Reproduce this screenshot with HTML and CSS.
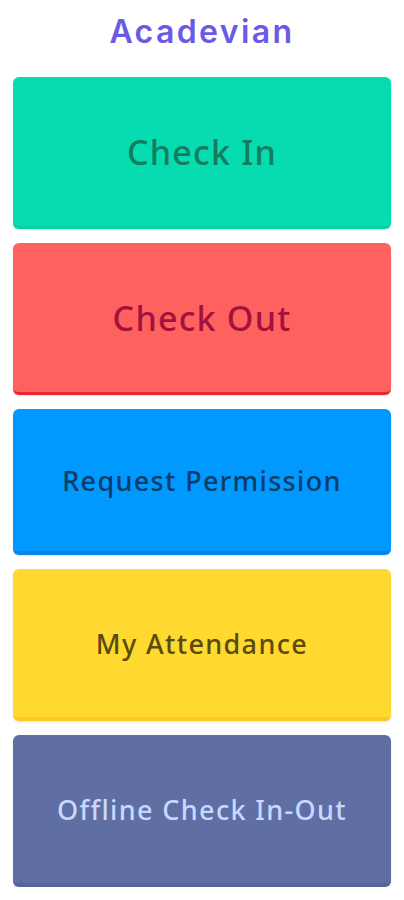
FILE: index.html
```html
<!DOCTYPE html>
<html lang="en">
<head>
  <meta charset="UTF-8" />
  <meta name="viewport" content="width=device-width, initial-scale=1.0"/>
  <title>Acadevian</title>
  <link rel="stylesheet" href="styles.css">
</head>
<body>
  <h1 class="brand">Acadevian</h1>

  <div class="menu">
    <button class="tile tile-in">Check In</button>
    <button class="tile tile-out">Check Out</button>
    <button class="tile tile-request">Request Permission</button>
    <button class="tile tile-attendance">My Attendance</button>
    <button class="tile tile-offline">Offline Check In-Out</button>
  </div>
</body>
</html>
```

FILE: styles.css
```css
body {
  margin: 0;
  padding: 0 13px;
  background: #fff;
  font-family: "Noto Sans", Arial, sans-serif;
}

.brand {
  margin: 0;
  height: 77px;
  line-height: 64px;
  text-align: center;
  font-family: "Inter", "Noto Sans", sans-serif;
  font-size: 32px;
  font-weight: 600;
  letter-spacing: 2.4px;
  color: #6a5be6;
}

.menu {
  display: flex;
  flex-direction: column;
  gap: 14px;
}

.tile {
  height: 152px;
  width: 100%;
  border: none;
  border-radius: 6px;
  font-family: "Noto Sans", Arial, sans-serif;
  font-weight: 500;
  font-size: 27px;
  letter-spacing: 1.35px;
  cursor: pointer;
  box-shadow: 0 1px 2px rgba(0, 0, 0, 0.12);
}

.tile-in {
  background: #07dbb0;
  color: #137d60;
  font-size: 34px;
  letter-spacing: 1.2px;
  border-bottom: 3px solid #05cfa6;
}

.tile-out {
  background: #ff615f;
  color: #a3123e;
  font-size: 34px;
  letter-spacing: 1.2px;
  border-bottom: 3px solid #e8262e;
}

.tile-request {
  height: 146px;
  background: #0099ff;
  color: #0c3d66;
  border-bottom: 4px solid #0a82f0;
}

.tile-attendance {
  background: #ffd830;
  color: #5b4a10;
  border-bottom: 4px solid #ffc81e;
}

.tile-offline {
  background: #5f6fa3;
  color: #c9d7ff;
  border-bottom: 4px solid #55659a;
}
```
